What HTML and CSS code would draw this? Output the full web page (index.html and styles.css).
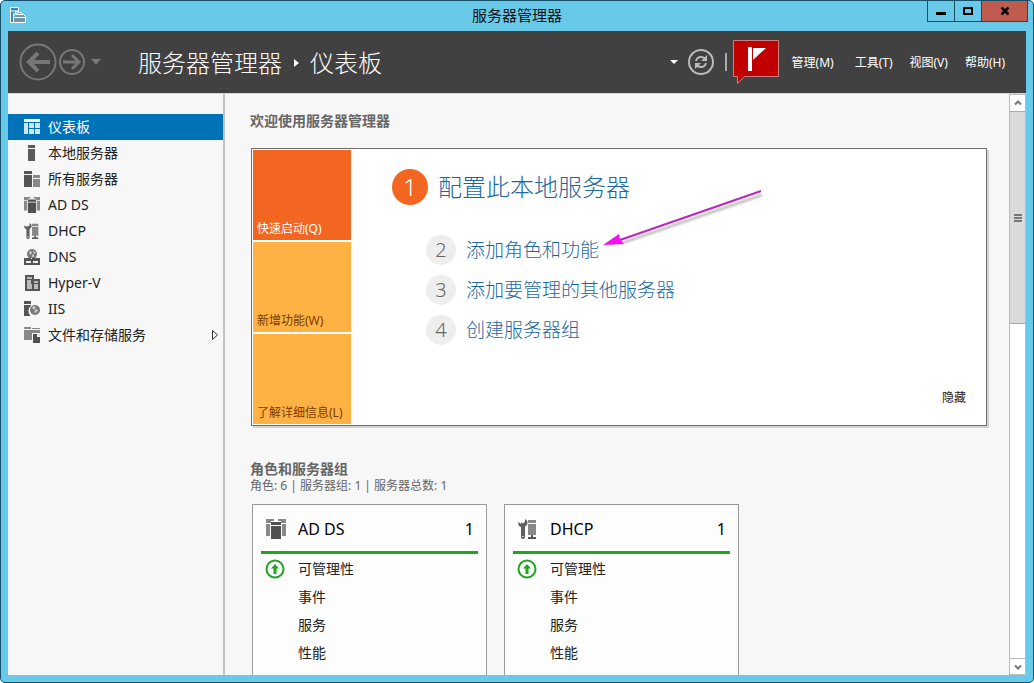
FILE: index.html
```html
<!DOCTYPE html>
<html lang="zh-CN">
<head>
<meta charset="utf-8">
<title>服务器管理器</title>
<link rel="stylesheet" href="styles.css">
</head>
<body>
<svg class="defs" aria-hidden="true">
  <symbol id="i-dash" viewBox="0 0 16 16"><path fill="#fff" d="M0 0h16v3H0z"/><path fill="#cfe6f7" d="M0 4h4v11H0zM5 4h5v5H5zM11 4h5v5h-5zM5 10h5v5H5zM11 10h5v5h-5z"/></symbol>
  <symbol id="i-local" viewBox="0 0 16 16"><path fill="#5a5a5a" d="M4 0h7v3H4zM4 4h7v12H4z"/></symbol>
  <symbol id="i-all" viewBox="0 0 16 16"><path fill="#555" d="M0 0h8v3H0zM0 4h8v12H0z"/><path fill="#888" d="M9 4h7v3H9zM9 8h7v8H9z"/></symbol>
  <symbol id="i-adds" viewBox="0 0 20 20"><path fill="#888" d="M0 0h8v2H5v2H0zM12 0h8v4h-5V2h-3zM0 5h4v12H0zM16 5h4v12h-4z"/><path fill="#505050" d="M5 3h10v3H5zM5 7h10v13H5z"/></symbol>
  <symbol id="i-dhcp" viewBox="0 0 20 20"><path fill="#606060" d="M3 0v3l1.500 1.500L7 3V0a4 4 0 0 1 0 7.500V18a2 2 0 0 1-4 0V8A4 4 0 0 1 .5 3L3 5z"/><circle cx="5" cy="17.500" r=".8" fill="#eee"/><path fill="#888" d="M10 1h8v3h-8zM10 5h8v11h-8z"/><path fill="#555" d="M13 16h2v2h3v2h-8v-2h3z"/></symbol>
  <symbol id="i-dns" viewBox="0 0 16 16"><circle cx="8" cy="5" r="5" fill="#777"/><path fill="#ccc" d="M5 3l2-1 1 2-2 2zM9 1l3 3-2 1zM8 6l2-1v3H8z"/><path fill="#555" d="M0 9h16v7H0z"/><path fill="#eee" d="M2 12h5v2H2zM9 12h5v2H9zM7 9h1v1H7z"/></symbol>
  <symbol id="i-hyper" viewBox="0 0 16 16"><path fill="#555" d="M1 0h9v4h6v12H1z"/><path fill="#bbb" d="M3 2h5v2H3zM3 5h5v9H3zM10 6h4v2h-4zM10 9h4v5h-4z"/><path fill="#555" d="M7 5h2v4H7z"/></symbol>
  <symbol id="i-iis" viewBox="0 0 16 16"><path fill="#555" d="M0 0h7v3H0zM0 4h7v1a6 6 0 0 0-1 9v1H0z"/><circle cx="11" cy="9" r="5" fill="#777"/><path fill="#ccc" d="M8 7l2-2 2 1-2 3zM12 8l2 1-2 3-2-1z"/></symbol>
  <symbol id="i-file" viewBox="0 0 16 16"><path fill="#888" d="M0 0h7v2H0zM0 3h16v3H8v7H0zM8 1h8v1H8z"/><path fill="#505050" d="M9 7h5l2 2v7H9z"/><path fill="#f5f5f5" d="M13 7h1l2 2v1h-3z"/></symbol>
  <symbol id="i-up" viewBox="0 0 20 20"><circle cx="10" cy="10" r="8.500" fill="none" stroke="#21a621" stroke-width="2"/><path fill="#21a621" d="M10 5l4 4.500h-2.500V15h-3V9.500H6z"/></symbol>
</svg>
<div class="window">
  <div class="titlebar">
    <svg class="app-icon" viewBox="0 0 16 16"><path fill="#3b88b8" stroke="#fff" d="M.5.5h8v4h-3v2h-2v9h-3z"/><path stroke="#fff" d="M1 4h7"/><path fill="#6f98ae" stroke="#fff" d="M3.500 9.500l2-2h8l2 2v6h-12zM6.500 7.500q0-2 3-2t3 2M4 10.500h11"/></svg>
    <span class="title">服务器管理器</span>
    <div class="controls">
      <button aria-label="最小化"><svg viewBox="0 0 12 12"><path d="M1 7h10v3H1z"/></svg></button>
      <button aria-label="最大化"><svg viewBox="0 0 12 12"><path fill="none" stroke="#000" stroke-width="2" d="M2 3h8v6H2z"/></svg></button>
      <button class="close" aria-label="关闭"><svg viewBox="0 0 12 12"><path fill="none" stroke="#000" stroke-width="2.500" d="M2.500 2.500l7 7M9.500 2.500l-7 7"/></svg></button>
    </div>
  </div>
  <header class="header">
    <button class="nav" aria-label="后退"><svg width="38" height="38" viewBox="0 0 38 38" fill="none" stroke="#777"><circle cx="19" cy="19" r="17.500" stroke-width="2"/><path stroke-width="4" d="M31 19H10M19 10l-9 9 9 9"/></svg></button>
    <button class="nav" aria-label="前进"><svg width="28" height="28" viewBox="0 0 28 28" fill="none" stroke="#777"><circle cx="14" cy="14" r="12" stroke-width="2"/><path stroke-width="3" d="M5 14h15M14 7l7 7-7 7"/></svg></button>
    <button class="nav" aria-label="历史记录"><svg width="18" height="8" viewBox="0 0 18 8"><path fill="#777" d="M4 1h10l-5 6z"/></svg></button>
    <nav class="crumbs"><span>服务器管理器</span><svg width="6" height="10" viewBox="0 0 6 10"><path fill="#fff" d="M1 1l5 4-5 4z"/></svg><span>仪表板</span></nav>
    <button class="nav" aria-label="选项"><svg width="8" height="6" viewBox="0 0 8 6"><path fill="#fff" d="M0 1h8L4 5z"/></svg></button>
    <button class="nav refresh" aria-label="刷新"><svg width="26" height="26" viewBox="0 0 26 26" fill="none" stroke="#bbb"><circle cx="13" cy="13" r="12" stroke-width="2"/><path stroke-width="2" d="M8 12q1-4 5-4 3 0 4 2M18 14q-1 4-5 4-3 0-4-2"/><path fill="#bbb" stroke="none" d="M19 6v6h-6zM7 20v-6h6z"/></svg></button>
    <span class="divider"></span>
    <button class="nav flag" aria-label="通知"><svg width="46" height="44" viewBox="0 0 46 44"><path fill="#c00000" stroke="#c98080" d="M.5.500h45v36H11.500l-7 7v-7h-4z"/><path fill="#fff" d="M15 7h4v24h-4z"/><path fill="#fff" d="M20 8h13L20 20z"/></svg></button>
    <div class="menu"><button>管理(M)</button><button>工具(T)</button><button>视图(V)</button><button>帮助(H)</button></div>
  </header>
  <div class="body">
    <nav class="sidebar">
      <a href="#" class="active"><svg><use href="#i-dash"/></svg>仪表板</a>
      <a href="#"><svg><use href="#i-local"/></svg>本地服务器</a>
      <a href="#"><svg><use href="#i-all"/></svg>所有服务器</a>
      <a href="#"><svg><use href="#i-adds"/></svg>AD DS</a>
      <a href="#"><svg><use href="#i-dhcp"/></svg>DHCP</a>
      <a href="#"><svg><use href="#i-dns"/></svg>DNS</a>
      <a href="#"><svg><use href="#i-hyper"/></svg>Hyper-V</a>
      <a href="#"><svg><use href="#i-iis"/></svg>IIS</a>
      <a href="#"><svg><use href="#i-file"/></svg>文件和存储服务<svg class="more" viewBox="0 0 8 10"><path fill="none" stroke="#333" d="M1.500 .5l5 4.500-5 4.500z"/></svg></a>
    </nav>
    <main class="main">
      <h2>欢迎使用服务器管理器</h2>
      <section class="welcome">
        <div class="tiles">
          <button class="on">快速启动(Q)</button>
          <button>新增功能(W)</button>
          <button>了解详细信息(L)</button>
        </div>
        <div class="steps">
          <a href="#" class="step first"><span class="num">1</span>配置此本地服务器</a>
          <a href="#" class="step"><span class="num">2</span>添加角色和功能</a>
          <a href="#" class="step"><span class="num">3</span>添加要管理的其他服务器</a>
          <a href="#" class="step"><span class="num">4</span>创建服务器组</a>
        </div>
        <button class="hide">隐藏</button>
        <svg class="pointer" viewBox="0 0 170 70"><path class="shade" fill="none" stroke="#777" stroke-width="2" d="M160 15L20 63"/><path stroke="#b928b9" stroke-width="2" d="M159 11L18 60"/><path fill="#f010f0" d="M1 65l16-11 1 5 4 5z"/></svg>
      </section>
      <h2>角色和服务器组</h2>
      <p class="summary">角色: 6 | 服务器组: 1 | 服务器总数: 1</p>
      <div class="cards">
        <article class="card">
          <h3><svg><use href="#i-adds"/></svg>AD DS<span>1</span></h3>
          <ul><li><svg><use href="#i-up"/></svg>可管理性</li><li>事件</li><li>服务</li><li>性能</li></ul>
        </article>
        <article class="card">
          <h3><svg><use href="#i-dhcp"/></svg>DHCP<span>1</span></h3>
          <ul><li><svg><use href="#i-up"/></svg>可管理性</li><li>事件</li><li>服务</li><li>性能</li></ul>
        </article>
      </div>
    </main>
    <div class="scrollbar">
      <button aria-label="向上"><svg viewBox="0 0 10 10"><path d="M2 6.500l3-3 3 3"/></svg></button>
      <div class="track"><div class="thumb"><i></i><i></i><i></i></div></div>
      <button aria-label="向下"><svg viewBox="0 0 10 10"><path d="M2 3.500l3 3 3-3"/></svg></button>
    </div>
  </div>
</div>
</body>
</html>
```
FILE: styles.css
```css
* { box-sizing: border-box; }
body {
  margin: 0;
  background: #fff;
  font: 14px/20px "Noto Sans", "Noto Sans CJK SC", sans-serif;
  color: #222;
}
button { border: 0; padding: 0; background: none; font: inherit; color: inherit; }
a { color: inherit; text-decoration: none; }
svg { flex: none; display: block; }
.defs { position: absolute; width: 0; height: 0; }

.window {
  height: 100vh;
  display: flex;
  flex-direction: column;
  border: 1px solid #14506a;
  border-radius: 5px;
  background: #68cae8;
  padding: 0 7px 7px;
  overflow: hidden;
}
.titlebar { flex: none; height: 30px; display: grid; grid-template-columns: 1fr auto 1fr; }
.app-icon { width: 16px; height: 16px; margin: 6px 2px; fill: none; }
.title { font-size: 15px; line-height: 28px; color: #111; }
.controls { justify-self: end; display: flex; height: 21px; margin-right: -2px; }
.controls button {
  width: 27px;
  display: grid;
  place-items: center;
  border: 1px solid #1e4b5c;
  border-width: 0 0 1px 1px;
}
.controls svg { width: 12px; height: 12px; }
.controls .close { width: 47px; background: #c25b4f; border-right-width: 1px; }

.header {
  flex: none;
  height: 62px;
  display: flex;
  align-items: center;
  padding: 0 21px 0 11px;
  background: #414141;
  color: #fff;
}
.nav { display: block; }
.nav + .nav { margin-left: 1px; }
.crumbs {
  flex: 1;
  display: flex;
  align-items: center;
  gap: 11px;
  padding: 1px 0 0 33px;
  font-size: 24px;
  font-weight: 300;
  line-height: 32px;
}
.nav.refresh { margin-left: 10px; }
.divider { width: 2px; height: 18px; margin: 0 6px 0 11px; background: #aaa; }
.menu { display: flex; gap: 17px; margin-left: 13px; padding-top: 2px; font-size: 12px; }
.menu button:first-child { margin-right: 4px; }

.body { flex: 1; min-height: 0; display: flex; border-top: 1px solid #d8d8d8; background: #f7f7f7; }
.sidebar { flex: none; width: 217px; padding-top: 20px; border-right: 2px solid #c4c4c4; }
.sidebar a {
  display: flex;
  align-items: center;
  gap: 8px;
  height: 26px;
  padding: 0 4px 0 16px;
}
.sidebar svg { width: 16px; height: 16px; }
.sidebar .active { background: #0072b8; color: #fff; }
.sidebar .more { width: 8px; height: 10px; margin-left: auto; }

.main { flex: 1; min-width: 0; padding: 17px 22px 0 25px; overflow: hidden; }
h2 { margin: 0; font-size: 14px; line-height: 20px; font-weight: 700; color: #666; }
.welcome {
  position: relative;
  display: flex;
  margin: 17px 0 33px 1px;
  padding: 1px;
  border: 1px solid #707070;
  background: #fff;
  box-shadow: 2px 2px 0 #d2d2d2;
}
.tiles { flex: none; width: 98px; display: grid; grid-auto-rows: 90px; gap: 2px; }
.tiles button {
  display: flex;
  align-items: flex-end;
  padding: 0 4px 1px;
  background: #ffb244;
  color: #7d3a00;
  font-size: 12px;
  white-space: nowrap;
}
.tiles .on { background: #f36621; color: #fff; }
.steps {
  flex: 1;
  display: flex;
  flex-direction: column;
  align-items: flex-start;
  gap: 10px;
  padding: 19px 0 0 75px;
}
.step {
  display: flex;
  align-items: center;
  gap: 10px;
  font-size: 19px;
  font-weight: 300;
  line-height: 30px;
  color: #1c689e;
}
.num {
  width: 30px;
  height: 30px;
  border-radius: 50%;
  background: #eee;
  color: #666;
  font-size: 20px;
  text-align: center;
}
.step.first { margin: 0 0 20px -34px; font-size: 24px; line-height: 36px; }
.first .num { width: 36px; height: 36px; background: #f36621; color: #fff; font-size: 24px; }
.hide { align-self: flex-end; margin: 0 19px 16px 0; font-size: 12px; }
.pointer { position: absolute; left: 350px; top: 31px; width: 170px; height: 70px; }
.shade { filter: blur(1px); opacity: .6; }

.summary { margin: 0; font-size: 12px; line-height: 14px; color: #666; }
.cards { display: flex; gap: 17px; margin: 11px 0 0 2px; }
.card {
  width: 235px;
  height: 220px;
  padding: 0 8px;
  border: 1px solid #999;
  background: #fdfdfd;
}
.card h3 {
  display: flex;
  align-items: center;
  gap: 12px;
  margin: 0;
  height: 49px;
  padding: 2px 4px 0 5px;
  border-bottom: 3px solid #21a621;
  font-size: 16px;
  font-weight: 400;
  color: #000;
}
.card h3 span { margin-left: auto; }
.card svg { width: 20px; height: 20px; }
.card ul { list-style: none; margin: 0; padding: 1px 4px; }
.card li { display: flex; align-items: center; gap: 13px; height: 28px; padding-left: 33px; }
.card li:first-child { padding-left: 0; }

.scrollbar {
  flex: none;
  width: 17px;
  display: flex;
  flex-direction: column;
  border: 1px solid #bbb;
  background: #fff;
}
.scrollbar button { flex: none; height: 16px; display: grid; place-items: center; }
.scrollbar button:last-child { border-top: 1px solid #bbb; }
.scrollbar svg { width: 10px; height: 10px; fill: none; stroke: #777; stroke-width: 2; }
.track { flex: 1; }
.thumb {
  height: 39%;
  display: flex;
  flex-direction: column;
  align-items: center;
  justify-content: center;
  gap: 1px;
  background: #dadada;
  border: 1px solid #aaa;
  border-width: 1px 0;
}
.thumb i { width: 8px; height: 2px; background: #777; }
```
